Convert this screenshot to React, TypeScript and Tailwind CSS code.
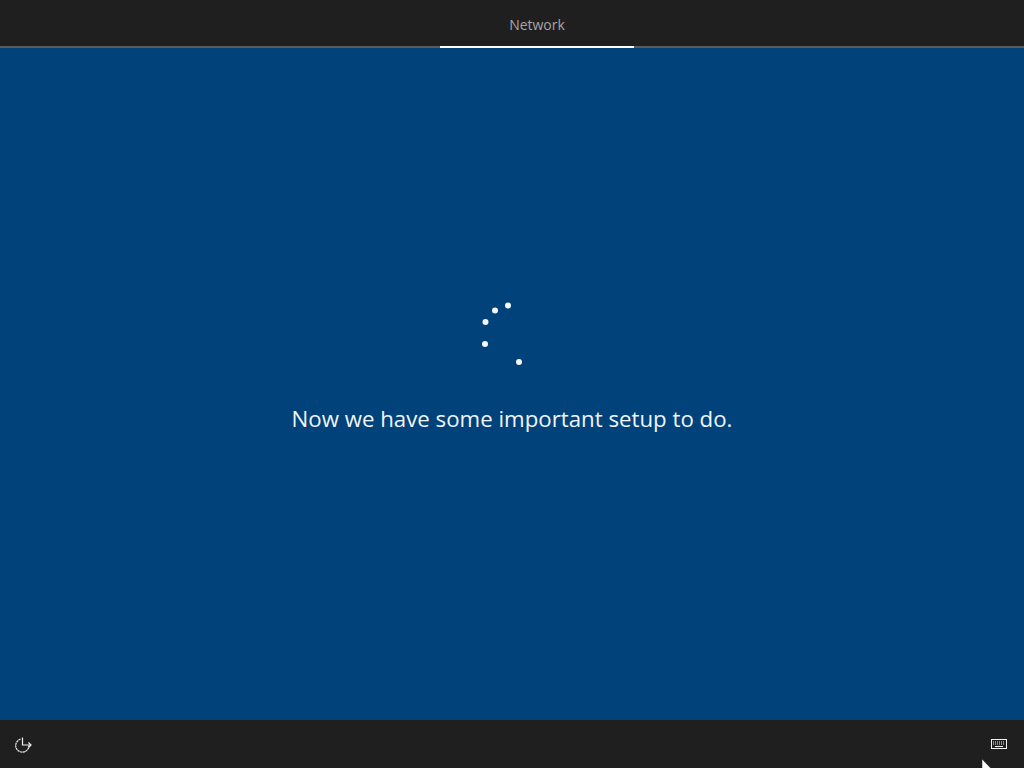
import React from 'react'

const dots = [
  [38, 5.5],
  [25, 10.5],
  [15.5, 22],
  [15, 44],
  [49, 62],
]

const App = () => {
  return (
    <div className="w-[1024px] h-[768px] flex flex-col overflow-hidden bg-[#004279] font-['Open_Sans',sans-serif]">
      <div className="h-[48px] shrink-0 flex justify-center bg-[#1f1f1f] border-b-2 border-[#5a5a5a]">
        <div className="w-[194px] h-[48px] ml-[50px] flex justify-center pt-[15px] border-b-2 border-white">
          <span className="text-[14px] leading-[20px] text-[#a6a6a6]">Network</span>
        </div>
      </div>

      <div className="flex-1 flex flex-col items-center pt-[252px]">
        <svg width="70" height="70" viewBox="0 0 70 70" className="-ml-[14px] block">
          {dots.map(([cx, cy]) => (
            <circle key={`${cx}-${cy}`} cx={cx} cy={cy} r="3" fill="#f4f8fb" />
          ))}
        </svg>
        <div className="mt-[33px] text-[22.25px] leading-[32px] text-[#f0f5fa] font-['Open_Sans',sans-serif]">
          Now we have some important setup to do.
        </div>
      </div>

      <div className="relative h-[48px] shrink-0 flex items-center justify-between pl-[14px] pr-[16px] bg-[#1f1f1f]">
        <svg width="20" height="18" viewBox="0 0 20 18" fill="none" stroke="#f2f2f2" strokeWidth="1.2" className="mt-[2px]">
          <path d="M6.5 3.2a6.6 6.6 0 1 0 8.4 6.3" strokeDasharray="2.2 0.5" />
          <path d="M8.5 1.5V9h8.5" />
          <path d="M14.5 6.5L17 9l-2.5 2.5" />
        </svg>
        <svg width="18" height="12" viewBox="0 0 18 12" fill="none" stroke="#f2f2f2">
          <rect x="1.5" y="1.5" width="15" height="9" />
          <path d="M3 4h12M3 6h12" strokeDasharray="1 1" />
          <path d="M5 8.5h8" />
        </svg>
        <svg width="12" height="18" viewBox="0 0 12 18" className="absolute left-[981px] top-[39px]">
          <path d="M1 0v16l3.5-3.5L7 18l3-1.5-2.5-5H12z" fill="#ffffff" stroke="#1f1f1f" strokeWidth="0.5" />
        </svg>
      </div>
    </div>
  )
}

export default App
